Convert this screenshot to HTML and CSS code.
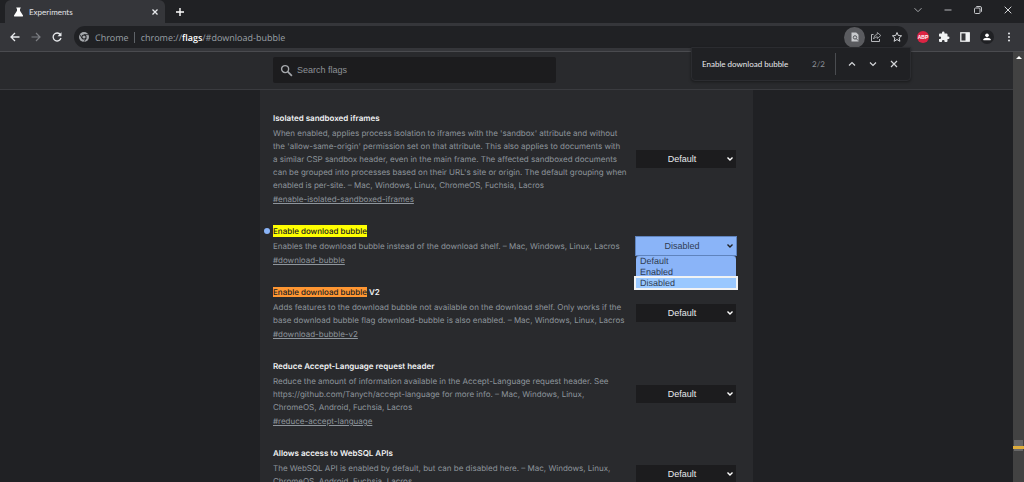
FILE: index.html
```html
<!DOCTYPE html>
<html lang="en">
<head>
<meta charset="utf-8">
<title>Experiments</title>
<link rel="stylesheet" href="styles.css">
</head>
<body>
<div class="browser">
  <div class="tabstrip">
    <div class="tab">
      <svg class="flask" viewBox="0 0 10 10"><path d="M2.800 .5h4.400v1H6.500v2.200L9.500 8.500Q9.900 9.500 8.800 9.500H1.200Q.1 9.500.5 8.500L3.500 3.700V1.500H2.800z" fill="#fff"/></svg>
      <span class="tab-title">Experiments</span>
      <button class="icon-btn small" aria-label="Close tab"><svg viewBox="0 0 10 10"><path d="M2.500 2.500l5 5M7.500 2.500l-5 5" stroke="#e8eaed" stroke-width="1.300"/></svg></button>
    </div>
    <button class="icon-btn" aria-label="New tab"><svg viewBox="0 0 12 12"><path d="M6 2v8M2 6h8" stroke="#fff" stroke-width="1.400"/></svg></button>
    <div class="window-controls">
      <button class="icon-btn" aria-label="Search tabs"><svg viewBox="0 0 12 12"><path d="M2.500 4.200L6 7.700l3.500-3.500" stroke="#a5a7aa"/></svg></button>
      <button class="icon-btn" aria-label="Minimize"><svg viewBox="0 0 12 12"><path d="M2.500 6h7" stroke="#b5b7ba"/></svg></button>
      <button class="icon-btn" aria-label="Restore"><svg viewBox="0 0 12 12"><rect x="2.500" y="4" width="5.500" height="5.500" rx="1" stroke="#c5c7ca"/><path d="M4.300 2.500H8q1.500 0 1.500 1.500v3.800" stroke="#c5c7ca"/></svg></button>
      <button class="icon-btn" aria-label="Close"><svg viewBox="0 0 12 12"><path d="M2.700 2.700l6.600 6.600M9.300 2.700L2.700 9.300" stroke="#d5d7da"/></svg></button>
    </div>
  </div>

  <div class="toolbar">
    <button class="icon-btn" aria-label="Back"><svg viewBox="0 0 12 12"><path d="M10.500 6H2M6 2L2 6l4 4" stroke="#e8eaed" stroke-width="1.300"/></svg></button>
    <button class="icon-btn" aria-label="Forward"><svg viewBox="0 0 12 12"><path d="M1.500 6H10M6 2l4 4-4 4" stroke="#7d7f83" stroke-width="1.200"/></svg></button>
    <button class="icon-btn" aria-label="Reload"><svg viewBox="0 0 12 12"><path d="M9.400 3.700A4 4 0 1 0 10 7" stroke="#e8eaed" stroke-width="1.300"/><path d="M10.500 1.300v4H6.500z" fill="#e8eaed"/></svg></button>
    <div class="omnibox">
      <svg class="chrome-logo" viewBox="0 0 12 12"><circle cx="6" cy="6" r="5" fill="#a5a8ac"/><circle cx="6" cy="6" r="2.600" fill="#202124"/><circle cx="6" cy="6" r="1.600" fill="#a5a8ac"/><path d="M6 3.600h4.500M3.900 7.200L1.700 3.400M8.100 7.200L5.800 11" stroke="#202124" stroke-width=".8"/></svg>
      <span class="origin">Chrome</span>
      <span class="url">chrome://<b>flags</b>/#download-bubble</span>
      <div class="omni-actions">
        <button class="icon-btn round" aria-label="Find in page"><svg viewBox="0 0 12 12"><path d="M2.500 1.500h4.700l2.300 2.300v6.700h-7z" fill="#c8cacd"/><circle cx="6" cy="6.400" r="1.700" stroke="#55575b"/><path d="M7.200 7.600l2 2" stroke="#55575b"/></svg></button>
        <button class="icon-btn" aria-label="Share"><svg viewBox="0 0 12 12"><path d="M3.500 3.500h-2v7h8V8" stroke="#b5b7ba"/><path d="M7.300 1.500l3.500 3-3.500 3V5.800Q5 5.700 3.500 8 3.900 3.800 7.300 3.300z" stroke="#b5b7ba" stroke-width=".8"/></svg></button>
        <button class="icon-btn" aria-label="Bookmark"><svg viewBox="0 0 12 12"><path d="M6 1.500l1.300 3 3.300.3-2.500 2.200.8 3.300L6 8.500l-2.900 1.800.8-3.300-2.500-2.200 3.300-.3z" stroke="#d5d7da"/></svg></button>
      </div>
    </div>
    <div class="extensions">
      <button class="icon-btn abp" aria-label="Adblock Plus">ABP</button>
      <button class="icon-btn" aria-label="Extensions"><svg viewBox="0 0 24 24"><path d="M20.500 11H19V7a2 2 0 0 0-2-2h-4V3.500a2.500 2.500 0 0 0-5 0V5H4a2 2 0 0 0-2 2v3.800h1.500a2.700 2.700 0 0 1 0 5.400H2V20a2 2 0 0 0 2 2h3.800v-1.500a2.700 2.700 0 0 1 5.400 0V22H17a2 2 0 0 0 2-2v-4h1.500a2.500 2.500 0 0 0 0-5z" fill="#f1f3f4"/></svg></button>
      <button class="icon-btn" aria-label="Side panel"><svg viewBox="0 0 12 12"><rect x="1.800" y="1.800" width="8.400" height="8.400" stroke="#f1f3f4" stroke-width="1.300"/><path d="M6.500 2h4v8h-4z" fill="#f1f3f4"/></svg></button>
      <button class="icon-btn profile" aria-label="Profile"><svg viewBox="0 0 12 12"><circle cx="6" cy="4" r="2.200" fill="#fff"/><path d="M1.700 10V8.700Q2 6.800 6 6.800t4.300 1.900V10z" fill="#fff"/></svg></button>
      <button class="icon-btn" aria-label="Menu"><svg viewBox="0 0 12 12"><g fill="#e8eaed"><circle cx="6" cy="2.500" r="1"/><circle cx="6" cy="6" r="1"/><circle cx="6" cy="9.500" r="1"/></g></svg></button>
    </div>
  </div>

  <div class="findbar">
    <input class="find-input" aria-label="Find" value="Enable download bubble">
    <span class="find-count">2/2</span>
    <div class="find-actions">
      <button class="icon-btn" aria-label="Previous"><svg viewBox="0 0 12 12"><path d="M3 7.500l3-3 3 3" stroke="#d5d7da" stroke-width="1.200"/></svg></button>
      <button class="icon-btn" aria-label="Next"><svg viewBox="0 0 12 12"><path d="M3 4.500l3 3 3-3" stroke="#d5d7da" stroke-width="1.200"/></svg></button>
      <button class="icon-btn" aria-label="Close find bar"><svg viewBox="0 0 12 12"><path d="M3 3l6 6M9 3L3 9" stroke="#d5d7da" stroke-width="1.200"/></svg></button>
    </div>
  </div>

  <div class="viewport">
    <div class="page">
      <header class="page-header">
        <div class="header-inner">
          <label class="search">
            <svg viewBox="0 0 14 14"><circle cx="5.500" cy="5.500" r="3.800" stroke="#a5a8ac" stroke-width="1.500"/><path d="M8.300 8.300l4.500 4.500" stroke="#a5a8ac" stroke-width="1.800"/></svg>
            <input type="search" placeholder="Search flags" aria-label="Search flags">
          </label>
        </div>
      </header>
      <main class="flags">
        <section class="flag">
          <div class="info">
            <h2>Isolated sandboxed iframes</h2>
            <p>When enabled, applies process isolation to iframes with the 'sandbox' attribute and without<br>the 'allow-same-origin' permission set on that attribute. This also applies to documents with<br>a similar CSP sandbox header, even in the main frame. The affected sandboxed documents<br>can be grouped into processes based on their URL's site or origin. The default grouping when<br>enabled is per-site. – Mac, Windows, Linux, ChromeOS, Fuchsia, Lacros</p>
            <a href="#enable-isolated-sandboxed-iframes">#enable-isolated-sandboxed-iframes</a>
          </div>
          <div class="choice"><select aria-label="Isolated sandboxed iframes"><option>Default</option></select><svg class="arrow" viewBox="0 0 8 8"><path d="M1.500 2.500L4 5l2.500-2.500"/></svg></div>
        </section>
        <section class="flag changed">
          <div class="info">
            <h2><mark class="current">Enable download bubble</mark></h2>
            <p>Enables the download bubble instead of the download shelf. – Mac, Windows, Linux, Lacros</p>
            <a href="#download-bubble">#download-bubble</a>
          </div>
          <div class="choice open"><select aria-label="Enable download bubble"><option>Default</option><option>Enabled</option><option selected>Disabled</option></select><svg class="arrow" viewBox="0 0 8 8"><path d="M1.500 2.500L4 5l2.500-2.500"/></svg>
            <ul class="menu" role="listbox" aria-label="Enable download bubble">
              <li role="option">Default</li>
              <li role="option">Enabled</li>
              <li role="option" aria-selected="true" class="picked">Disabled</li>
            </ul>
          </div>
        </section>
        <section class="flag">
          <div class="info">
            <h2><mark>Enable download bubble</mark> V2</h2>
            <p>Adds features to the download bubble not available on the download shelf. Only works if the<br>base download bubble flag download-bubble is also enabled. – Mac, Windows, Linux, Lacros</p>
            <a href="#download-bubble-v2">#download-bubble-v2</a>
          </div>
          <div class="choice"><select aria-label="Enable download bubble V2"><option>Default</option></select><svg class="arrow" viewBox="0 0 8 8"><path d="M1.500 2.500L4 5l2.500-2.500"/></svg></div>
        </section>
        <section class="flag">
          <div class="info">
            <h2>Reduce Accept-Language request header</h2>
            <p>Reduce the amount of information available in the Accept-Language request header. See<br>https://github.com/Tanych/accept-language for more info. – Mac, Windows, Linux,<br>ChromeOS, Android, Fuchsia, Lacros</p>
            <a href="#reduce-accept-language">#reduce-accept-language</a>
          </div>
          <div class="choice"><select aria-label="Reduce Accept-Language request header"><option>Default</option></select><svg class="arrow" viewBox="0 0 8 8"><path d="M1.500 2.500L4 5l2.500-2.500"/></svg></div>
        </section>
        <section class="flag">
          <div class="info">
            <h2>Allows access to WebSQL APIs</h2>
            <p>The WebSQL API is enabled by default, but can be disabled here. – Mac, Windows, Linux,<br>ChromeOS, Android, Fuchsia, Lacros</p>
            <a href="#web-sql-access">#web-sql-access</a>
          </div>
          <div class="choice"><select aria-label="Allows access to WebSQL APIs"><option>Default</option></select><svg class="arrow" viewBox="0 0 8 8"><path d="M1.500 2.500L4 5l2.500-2.500"/></svg></div>
        </section>
      </main>
    </div>
    <div class="scrollbar"><span class="scroll-up"></span><span class="thumb"></span></div>
  </div>
</div>
</body>
</html>
```
FILE: styles.css
```css
* { box-sizing: border-box; }
body { margin: 0; background: #202124; overflow: hidden; text-rendering: geometricPrecision; }
button, input, select { font: inherit; color: inherit; border: 0; padding: 0; margin: 0; background: none; outline: none; }
svg { display: block; fill: none; }

.browser {
  position: relative;
  display: flex;
  flex-direction: column;
  height: 100vh;
  font-family: Lato, "Open Sans", sans-serif;
  font-size: 8px;
  color: #e8eaed;
}
.icon-btn { display: grid; place-items: center; flex: none; width: 12px; height: 12px; }
.icon-btn svg { width: 12px; height: 12px; }
.icon-btn.small, .icon-btn.small svg { width: 10px; height: 10px; }

.tabstrip { display: flex; align-items: center; height: 23px; padding-left: 5px; background: #202124; }
.tab { display: flex; align-items: center; gap: 5px; width: 160px; height: 23px; padding: 0 5px 0 8px; margin-right: 9px; background: #35363a; border-radius: 6px 6px 0 0; }
.flask { width: 11px; height: 10px; }
.tab-title { flex: 1; color: #e0e2e5; }
.window-controls { display: flex; gap: 18px; margin-left: auto; padding-right: 10px; margin-bottom: 3px; }

.toolbar { display: flex; align-items: center; gap: 9px; height: 28px; padding: 0 9px; background: #35363a; }
.omnibox { display: flex; align-items: center; flex: 1; height: 22px; margin-left: 2px; padding: 0 5px 0 4px; border-radius: 11px; background: #202124; font: 9px "Open Sans", sans-serif; color: #9aa0a6; }
.chrome-logo { width: 12px; height: 12px; margin-right: 5px; }
.origin { padding-right: 5px; border-right: 1px solid #5f6368; line-height: 11px; }
.url { padding-left: 6px; line-height: 11px; }
.url b { font-weight: 600; color: #fff; }
.omni-actions { display: flex; align-items: center; gap: 9px; margin-left: auto; }
.icon-btn.round { width: 21px; height: 21px; margin-right: -4px; border-radius: 50%; background: #5a5b5f; }
.extensions { display: flex; align-items: center; gap: 9px; }
.abp { background: #dc2443; border-radius: 50%; font: bold 5px "Liberation Sans", sans-serif; color: #fff; }
.profile { width: 14px; height: 14px; border-radius: 50%; background: #202124; }
.profile svg { width: 10px; height: 10px; }

.findbar { position: absolute; z-index: 3; top: 47px; right: 113px; display: flex; align-items: center; width: 220px; height: 34px; padding: 0 10px; background: #202124; border: 1px solid #2b2c30; border-radius: 0 0 4px 4px; box-shadow: 0 1px 3px #0006; }
.find-input { flex: 1; min-width: 0; }
.find-count { padding-right: 10px; color: #8b8f95; }
.find-actions { display: flex; align-items: center; gap: 9px; height: 22px; padding-left: 10px; border-left: 1px solid #4a4c50; }

.viewport { display: flex; flex: 1; min-height: 0; border-top: 1px solid #4a4b4f; font-family: Inter, Roboto, sans-serif; }
.page { flex: 1; display: flex; flex-direction: column; min-width: 0; }
.page-header { flex: none; padding: 5px 0 6px; background: #292a2d; border-bottom: 1px solid #3a3b3f; }
.header-inner { width: 100%; max-width: 493px; margin: 0 auto; padding: 0 13px; }
.search { display: flex; align-items: center; gap: 4px; width: 283px; height: 26px; padding: 0 7px; border-radius: 2px; background: #1c1c1e; font: 9px "Liberation Sans", sans-serif; }
.search svg { width: 13px; height: 13px; }
.search input { flex: 1; min-width: 0; }
.search input::placeholder { color: #8e9297; opacity: 1; }

.flags { flex: 1; min-height: 0; overflow: hidden; width: 100%; max-width: 493px; margin: 0 auto; padding: 21px 17px 0 13px; background: #292a2d; }
.flag { position: relative; display: flex; align-items: center; justify-content: space-between; margin-bottom: 18px; color: #8e959c; }
.info { flex: 1; min-width: 0; white-space: nowrap; line-height: 13px; }
.info h2 { margin: 0 0 1px; font-size: 8px; font-weight: 600; line-height: 15px; color: #f1f3f4; }
.info p { margin: 0; font-size: 8px; }
.info a { display: block; height: 14px; font-size: 8px; line-height: 14px; color: inherit; text-decoration: underline; }
mark { background: #ff9632; color: #202124; font-weight: 500; }
mark.current { padding: 1px 0; background: #ff0; }
.changed::before { content: ""; position: absolute; left: -9px; top: 4px; width: 6px; height: 6px; border-radius: 50%; background: #8ab4f8; }

.choice { position: relative; flex: none; width: 100px; font: 9px "Liberation Sans", sans-serif; }
.choice select { appearance: none; display: block; width: 100%; height: 18px; padding-right: 8px; background: #1c1c1e; color: #e8eaed; text-align-last: center; }
.arrow { position: absolute; right: 2px; top: 5px; width: 8px; height: 8px; stroke: #fff; stroke-width: 1.400; pointer-events: none; }
.open select { background: #8ab4f8; color: #303c52; outline: 1px solid #5f83bd; }
.open .arrow { stroke: #202124; }
.menu { position: absolute; z-index: 2; top: 18px; left: 0; width: 100px; margin: 0; padding: 0; list-style: none; line-height: 11px; color: #303c52; background: #8ab4f8; border-top: 1px solid #5f83bd; border-radius: 4px; }
.menu li { padding-left: 4px; }
.menu .picked { line-height: 10px; background: #99c8ff; outline: 2px solid #f1f3f4; }

.scrollbar { position: relative; flex: none; width: 11px; background: #424242; }
.scroll-up { display: block; margin: 4px auto 0; width: 0; border: 3px solid transparent; border-top: 0; border-bottom-color: #fff; }
.thumb { position: absolute; left: 1px; right: 1px; bottom: 31px; height: 11px; background: #686868; }
.thumb::after { content: ""; position: absolute; left: -1px; right: -1px; bottom: 2px; height: 3px; background: #e0ae3c; }
```
